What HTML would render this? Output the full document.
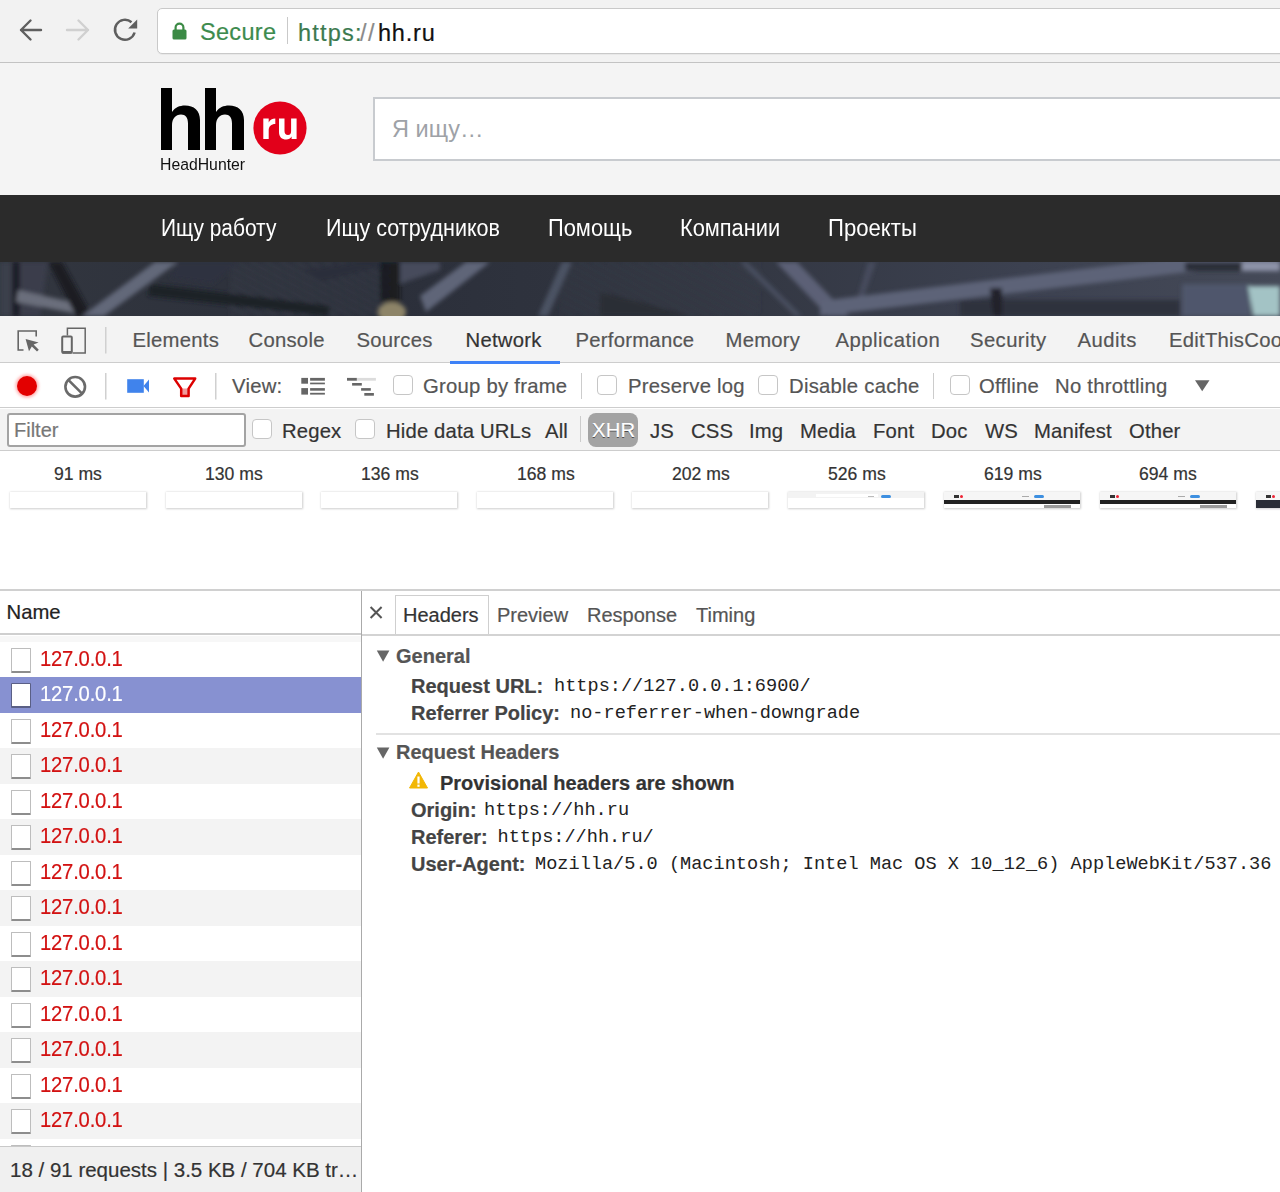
<!DOCTYPE html>
<html><head><meta charset="utf-8">
<style>
*{box-sizing:border-box;margin:0;padding:0}
html,body{width:1280px;height:1192px;overflow:hidden;background:#fff;font-family:"Liberation Sans",sans-serif}
.a{position:absolute;white-space:pre}
body div{white-space:pre;-webkit-text-stroke:0.2px currentColor}
#page div,body div.mono{-webkit-text-stroke:0}
#chrome{position:absolute;left:0;top:0;width:1280px;height:63px;background:#f2f2f2;border-bottom:1px solid #c3c3c3}
#omni{position:absolute;left:157px;top:8px;width:1140px;height:46px;background:#fff;border:1px solid #c9c9c9;border-radius:5px;box-shadow:0 1px 0 rgba(0,0,0,.04)}
#page{position:absolute;left:0;top:63px;width:1280px;height:253px;background:#f4f4f4;overflow:hidden}
#nav{position:absolute;left:0;top:132px;width:1280px;height:67px;background:#2b2b2b}
#hero{position:absolute;left:0;top:199px;width:1280px;height:54px;background:#3a3f4c;overflow:hidden}
.nv{position:absolute;top:18.5px;font-size:23px;line-height:28px;color:#fff;transform-origin:0 0}
.tab{position:absolute;top:327.8px;font-size:20.3px;letter-spacing:0.25px;color:#555;line-height:24px}
.tb2{position:absolute;top:373.5px;font-size:20.3px;letter-spacing:0.25px;color:#555;line-height:24px}
.cb{position:absolute;width:20px;height:20px;border:1px solid #c6c6c6;border-radius:4px;background:#fff}
.ft{position:absolute;top:418.5px;font-size:20.3px;letter-spacing:0.15px;color:#333;line-height:24px}
.tm{position:absolute;top:464px;font-size:17.6px;color:#333;line-height:20px}
.fr{position:absolute;top:492px;width:136px;height:16px;background:#fff;box-shadow:0 0 2px 0.5px rgba(0,0,0,.2);overflow:hidden}
.row{position:absolute;left:0;width:361px;height:35.5px}
.row .ic{position:absolute;left:10.5px;top:6px;width:20px;height:25px;border:1.6px solid #bdbdbd;border-bottom:2.2px solid #8d8d8d;border-radius:1px;background:#fff}
.row .t{position:absolute;left:39.5px;top:5.2px;font-size:21.3px;letter-spacing:-0.2px;color:#d01515;line-height:24px;transform:scaleX(0.95);transform-origin:0 0}
.lbl{position:absolute;left:411px;font-size:20px;font-weight:700;color:#444;line-height:24px}
.mono{position:absolute;font-family:"Liberation Mono",monospace;font-size:18.6px;color:#222;line-height:24px}
</style></head><body>

<!-- Chrome toolbar -->
<div id="chrome">
  <svg class="a" style="left:0;top:0" width="150" height="62" viewBox="0 0 150 62">
    <path d="M21 30H41M21 30L30.5 20.5M21 30L30.5 39.5" stroke="#5f5f5f" stroke-width="2.4" fill="none" stroke-linecap="round" stroke-linejoin="round"/>
    <path d="M67 30H88M88 30L78.5 20.5M88 30L78.5 39.5" stroke="#d0d0d0" stroke-width="2.4" fill="none" stroke-linecap="round" stroke-linejoin="round"/>
    <path d="M134.6 32.5A10 10 0 1 1 131.5 22.2" stroke="#5f5f5f" stroke-width="2.5" fill="none"/>
    <path d="M137.2 19.5V28.6H128.2Z" fill="#5f5f5f"/>
  </svg>
  <div id="omni">
    <svg class="a" style="left:14px;top:13px" width="15" height="18" viewBox="0 0 15 18"><path d="M3.6 8V5.6a3.9 3.9 0 0 1 7.8 0V8" stroke="#3b8a45" stroke-width="2.2" fill="none"/><rect x="0.5" y="7.5" width="14" height="10" rx="1.5" fill="#3b8a45"/></svg>
    <div class="a" style="left:42px;top:8.5px;font-size:23.5px;line-height:28px;color:#3d8b4e;letter-spacing:0.3px">Secure</div>
    <div class="a" style="left:129px;top:8px;width:1px;height:27px;background:#c9c9c9"></div>
    <div class="a" style="left:140px;top:10px;font-size:23.5px;line-height:28px;color:#3c7a4f;letter-spacing:1.2px">https:</div>
    <div class="a" style="left:202px;top:10px;font-size:23.5px;line-height:28px;color:#8a8a8a;letter-spacing:1.5px">//</div>
    <div class="a" style="left:220px;top:10px;font-size:23.5px;line-height:28px;color:#111;letter-spacing:0.8px">hh.ru</div>
  </div>
</div>

<!-- Page -->
<div id="page">
  <svg class="a" style="left:161px;top:25px" width="84" height="62" viewBox="0 0 84 62">
    <path d="M0 0H11V24C14 19.5 18.5 17.5 24 17.5C33 17.5 39 22.5 39 32V62H27V35.5C27 29.5 24.5 26.5 20 26.5C14.5 26.5 11 30.5 11 37.5V62H0Z" fill="#000"/>
    <path transform="translate(44 0)" d="M0 0H11V24C14 19.5 18.5 17.5 24 17.5C33 17.5 39 22.5 39 32V62H27V35.5C27 29.5 24.5 26.5 20 26.5C14.5 26.5 11 30.5 11 37.5V62H0Z" fill="#000"/>
  </svg>
  <svg class="a" style="left:253px;top:38px" width="54" height="54" viewBox="0 0 54 54">
    <circle cx="27" cy="27" r="26.6" fill="#e2001a"/>
    <path transform="translate(10.3 17.5)" d="M0 0H5.4V4C6.5 1.5 9 0 12 0V5.6C8 5.6 5.4 8 5.4 12V20.5H0Z" fill="#fff"/>
    <path transform="translate(26 17.5)" d="M0 0H5.5V12.5C5.5 15.2 6.8 16.4 9 16.4C11.2 16.4 12.1 15 12.1 12.5V0H17.6V20.5H12.6V18C11.5 20 9.6 21 7.4 21C2.8 21 0 18.5 0 13.5Z" fill="#fff"/>
  </svg>
  <div class="a" style="left:160px;top:91.5px;font-size:16.8px;line-height:20px;color:#111;transform:scaleX(0.94);transform-origin:0 0">HeadHunter</div>
  <div class="a" style="left:373px;top:34px;width:1000px;height:64px;background:#fff;border:2px solid #c8cbcf"></div>
  <div class="a" style="left:392px;top:52px;font-size:23.5px;line-height:28px;color:#9ea2a7">Я ищу…</div>
  <div id="nav">
    <div class="nv" style="left:161px;transform:scaleX(0.909)">Ищу работу</div>
    <div class="nv" style="left:326px;transform:scaleX(0.937)">Ищу сотрудников</div>
    <div class="nv" style="left:548px;transform:scaleX(0.95)">Помощь</div>
    <div class="nv" style="left:680px;transform:scaleX(0.948)">Компании</div>
    <div class="nv" style="left:828px;transform:scaleX(0.962)">Проекты</div>
  </div>
  <div id="hero"><svg width="1280" height="54" viewBox="0 0 1280 54" style="display:block">
<defs>
<linearGradient id="hg" x1="0" y1="0" x2="1" y2="0">
<stop offset="0" stop-color="#32363f"/><stop offset="0.3" stop-color="#2b2f3a"/><stop offset="0.55" stop-color="#323641"/><stop offset="0.8" stop-color="#3c4150"/><stop offset="1" stop-color="#454a58"/>
</linearGradient>
<filter id="hb" x="-5%" y="-20%" width="110%" height="140%"><feGaussianBlur stdDeviation="2.2"/></filter>
<pattern id="stp" width="7" height="7" patternUnits="userSpaceOnUse" patternTransform="rotate(28)"><rect width="7" height="3" fill="#3a3f4c"/></pattern>
</defs>
<rect width="1280" height="54" fill="url(#hg)"/>
<g filter="url(#hb)">
<rect x="230" y="0" width="160" height="54" fill="url(#stp)" opacity="0.6"/>
<rect x="560" y="0" width="200" height="54" fill="url(#stp)" opacity="0.45"/>
<path d="M0 0H12V54H0Z" fill="#3b3f4c"/>
<path d="M12 0H20V54H12Z" fill="#1c1f27"/>
<path d="M20 0H48L40 54H20Z" fill="#3a3e4b"/>
<path d="M18 28L80 42L78 52L16 40Z" fill="#6a6e7c"/>
<path d="M48 0H62L92 54H76Z" fill="#1a1c23"/>
<path d="M155 0H178L104 54H82Z" fill="#626779"/>
<path d="M150 22L330 44L328 54L148 34Z" fill="#1d2028"/>
<path d="M178 0H240L212 22L170 16Z" fill="#2f3340"/>
<path d="M300 8L360 0H400L320 20Z" fill="#2a2e3a"/>
<ellipse cx="392" cy="50" rx="14" ry="10" fill="#8d8468"/>
<path d="M380 0H400V40H380Z" fill="#15171d" opacity="0.8"/>
<path d="M400 0H440L440 8L400 22Z" fill="#474c5c"/>
<path d="M420 34L466 0H490L426 50Z" fill="#5f6578"/>
<path d="M562 0H572L548 54H538Z" fill="#4c5264"/>
<path d="M600 30L640 40L690 54H600Z" fill="#2a2d36"/>
<path d="M740 0H747L802 54H795Z" fill="#4a4f60"/>
<path d="M776 0H797L849 54H828Z" fill="#5c6176"/>
<path d="M868 0H876L862 40H856Z" fill="#474c5d"/>
<path d="M820 39L1280 -17V-1L820 54Z" fill="#5d6378"/>
<path d="M960 38H1180V54H960Z" fill="#2f333e"/>
<path d="M990 26H1002V54H993Z" fill="#20232b"/>
<path d="M1185 0H1242V9H1185Z" fill="#2b2e38"/>
<path d="M1242 0H1280V9H1242Z" fill="#8d93a8"/>
<path d="M1182 22H1250V54H1182Z" fill="#4f566c"/>
<path d="M1248 24H1280V54H1253Z" fill="#a3c3c5"/>
</g>
</svg></div>
</div>

<!-- DevTools -->
<div class="a" style="left:0;top:316px;width:1280px;height:47px;background:#f3f3f3;border-bottom:1px solid #cdcdcd"></div>
<div class="a" style="left:0;top:364px;width:1280px;height:44px;background:#fff;border-bottom:1px solid #cdcdcd"></div>
<div class="a" style="left:0;top:409px;width:1280px;height:42px;background:#f3f3f3;border-bottom:1px solid #cdcdcd"></div>

<svg class="a" style="left:0;top:316px" width="240" height="92" viewBox="0 316 240 92">
  <!-- inspect -->
  <path d="M23.5 350H18.2V331H36.2V336.5" stroke="#666" stroke-width="1.6" fill="none"/>
  <path d="M25.6 339L38.6 342.6L33.6 344.6L38.8 349.8L37 351.6L31.8 346.4L29 351.2Z" fill="#666"/>
  <!-- device -->
  <path d="M67.4 335.5V328.2H85.2V352.9H72.5" stroke="#666" stroke-width="1.5" fill="none"/>
  <rect x="62.2" y="336.5" width="9.6" height="16.2" rx="1" stroke="#666" stroke-width="2" fill="none"/>
  <rect x="62.2" y="351" width="9.6" height="2.6" fill="#666"/>
  <rect x="105" y="327" width="1.5" height="26.5" fill="#d0d0d0"/>
  <!-- record -->
  <circle cx="27" cy="386" r="11.5" fill="#ff6a6a" opacity="0.55" filter="url(#glow)"/><circle cx="27" cy="386" r="10" fill="#e30000"/>
  <!-- clear -->
  <circle cx="75.2" cy="386.8" r="9.8" stroke="#6a6a6a" stroke-width="2.6" fill="none"/>
  <path d="M68.3 379.9L82.1 393.7" stroke="#6a6a6a" stroke-width="2.6"/>
  <rect x="105" y="373" width="1.5" height="26.5" fill="#d0d0d0"/>
  <!-- camera -->
  <rect x="127.2" y="379.2" width="16.6" height="13.6" fill="#4083ec"/>
  <path d="M143.5 386L149 379.5V392.5Z" fill="#4083ec"/>
  <!-- funnel -->
  <path d="M181.5 388.5L189 388.5L189 395.8L181.5 395.8Z" fill="#f09a9a"/>
  <path d="M174.3 378.6H195.2L188.6 388.6V396H181.2V388.6Z" stroke="#dd0000" stroke-width="2.5" fill="none" stroke-linejoin="round"/>
  <rect x="215" y="373" width="1.5" height="26.5" fill="#d0d0d0"/>
  <defs><filter id="glow" x="-50%" y="-50%" width="200%" height="200%"><feGaussianBlur in="SourceGraphic" stdDeviation="1.8"/></filter></defs>
</svg>
<svg class="a" style="left:295px;top:370px" width="90" height="32" viewBox="295 370 90 32" fill="#666">
  <rect x="301.3" y="377.9" width="6.7" height="5.8"/>
  <rect x="301.3" y="388.1" width="6.7" height="6.5"/>
  <rect x="310.1" y="377.9" width="14.8" height="2.8"/>
  <rect x="310.1" y="382.6" width="14.8" height="1.7"/>
  <rect x="310.1" y="388.1" width="14.8" height="2.6"/>
  <rect x="310.1" y="392.8" width="14.8" height="1.8"/>
  <rect x="347" y="377.9" width="9.9" height="2.8"/>
  <rect x="356.9" y="377.9" width="19" height="2.8" fill="#dcdcdc"/>
  <rect x="352.1" y="383" width="9.7" height="2.6"/>
  <rect x="361.1" y="388.1" width="9.7" height="2.6"/>
  <rect x="364.3" y="393" width="9.6" height="2.7"/>
</svg>
<svg class="a" style="left:1190px;top:375px" width="24" height="20" viewBox="1190 375 24 20"><path d="M1195 380.2H1209.5L1202.2 391.2Z" fill="#666"/></svg>
<div class="tab" style="left:132.5px">Elements</div>
<div class="tab" style="left:248.5px">Console</div>
<div class="tab" style="left:356.5px">Sources</div>
<div class="tab" style="left:465.5px;color:#333">Network</div>
<div class="a" style="left:450px;top:361px;width:110px;height:3px;background:#3e82f7"></div>
<div class="tab" style="left:575.5px">Performance</div>
<div class="tab" style="left:725.5px">Memory</div>
<div class="tab" style="left:835.5px;letter-spacing:0.5px">Application</div>
<div class="tab" style="left:970px;letter-spacing:0.4px">Security</div>
<div class="tab" style="left:1077.5px;letter-spacing:0.5px">Audits</div>
<div class="tab" style="left:1169px">EditThisCookie</div>

<div class="tb2" style="left:232px">View:</div>
<div class="cb" style="left:393px;top:375px"></div>
<div class="tb2" style="left:423px">Group by frame</div>
<div class="a" style="left:581px;top:373px;width:1px;height:26px;background:#ccc"></div>
<div class="cb" style="left:597px;top:375px"></div>
<div class="tb2" style="left:628px">Preserve log</div>
<div class="cb" style="left:758px;top:375px"></div>
<div class="tb2" style="left:789px">Disable cache</div>
<div class="a" style="left:933px;top:373px;width:1px;height:26px;background:#ccc"></div>
<div class="cb" style="left:950px;top:375px"></div>
<div class="tb2" style="left:979px">Offline</div>
<div class="tb2" style="left:1055px">No throttling</div>

<div class="a" style="left:7px;top:413px;width:239px;height:34px;background:#fff;border:2px solid #a3a3a3;border-radius:3px"></div>
<div class="a" style="left:14px;top:418px;font-size:20px;line-height:24px;color:#777">Filter</div>
<div class="cb" style="left:252px;top:419px"></div>
<div class="ft" style="left:282px">Regex</div>
<div class="cb" style="left:355px;top:419px"></div>
<div class="ft" style="left:386px">Hide data URLs</div>
<div class="ft" style="left:545px">All</div>
<div class="a" style="left:580px;top:416px;width:1px;height:26px;background:#ccc"></div>
<div class="a" style="left:588px;top:413px;width:50px;height:33.5px;background:#a3a3a3;border-radius:8px"></div>
<div class="ft" style="left:592px;top:417.5px;color:#fff;text-shadow:0 1px 0 rgba(0,0,0,.55)">XHR</div>
<div class="ft" style="left:650px">JS</div>
<div class="ft" style="left:691px">CSS</div>
<div class="ft" style="left:749px">Img</div>
<div class="ft" style="left:800px">Media</div>
<div class="ft" style="left:873px">Font</div>
<div class="ft" style="left:931px">Doc</div>
<div class="ft" style="left:985px">WS</div>
<div class="ft" style="left:1034px">Manifest</div>
<div class="ft" style="left:1129px">Other</div>

<div class="tm" style="left:54px">91 ms</div>
<div class="tm" style="left:205px">130 ms</div>
<div class="tm" style="left:361px">136 ms</div>
<div class="tm" style="left:517px">168 ms</div>
<div class="tm" style="left:672px">202 ms</div>
<div class="tm" style="left:828px">526 ms</div>
<div class="tm" style="left:984px">619 ms</div>
<div class="tm" style="left:1139px">694 ms</div>

<div class="fr" style="left:10px"></div>
<div class="fr" style="left:165.5px"></div>
<div class="fr" style="left:321px"></div>
<div class="fr" style="left:476.5px"></div>
<div class="fr" style="left:632px"></div>
<div class="fr" style="left:788px"><div class="a" style="left:0;top:0;width:136px;height:6px;background:#f3f3f3"></div><div class="a" style="left:28px;top:1.5px;width:62px;height:3px;background:#fff"></div><div class="a" style="left:93px;top:2.7px;width:9.5px;height:3.2px;background:#3d8fe0;border-radius:1.5px"></div><div class="a" style="left:80px;top:3.5px;width:6px;height:1px;background:#bbb"></div></div>
<div class="fr" style="left:944px"><div class="a" style="left:0;top:0;width:136px;height:8px;background:#f6f6f6"></div><div class="a" style="left:10px;top:2.5px;width:5px;height:3.5px;background:#333"></div><div class="a" style="left:15.5px;top:3px;width:3px;height:3px;background:#e23;border-radius:50%"></div><div class="a" style="left:90px;top:2.5px;width:10px;height:3.3px;background:#3d8fe0;border-radius:1.5px"></div><div class="a" style="left:78px;top:3.6px;width:7px;height:1px;background:#aaa"></div><div class="a" style="left:0;top:8px;width:136px;height:3.6px;background:#222"></div><div class="a" style="left:100px;top:13px;width:27px;height:3px;background:#9a9a9a"></div></div>
<div class="fr" style="left:1100px"><div class="a" style="left:0;top:0;width:136px;height:8px;background:#f6f6f6"></div><div class="a" style="left:10px;top:2.5px;width:5px;height:3.5px;background:#333"></div><div class="a" style="left:15.5px;top:3px;width:3px;height:3px;background:#e23;border-radius:50%"></div><div class="a" style="left:90px;top:2.5px;width:10px;height:3.3px;background:#3d8fe0;border-radius:1.5px"></div><div class="a" style="left:78px;top:3.6px;width:7px;height:1px;background:#aaa"></div><div class="a" style="left:0;top:8px;width:136px;height:3.6px;background:#222"></div><div class="a" style="left:100px;top:13px;width:27px;height:3px;background:#9a9a9a"></div></div>
<div class="fr" style="left:1256px"><div class="a" style="left:0;top:0;width:136px;height:8px;background:#f6f6f6"></div><div class="a" style="left:10px;top:2.5px;width:5px;height:3.5px;background:#333"></div><div class="a" style="left:15.5px;top:3px;width:3px;height:3px;background:#e23;border-radius:50%"></div><div class="a" style="left:0;top:8px;width:136px;height:8px;background:#2a2d36"></div></div>
<div class="a" style="left:0;top:589px;width:1280px;height:2px;background:#d0d0d0"></div>

<!-- Request list -->
<div class="a" style="left:0;top:591px;width:361px;height:44px;background:#fff;border-bottom:2px solid #cfcfcf"></div>
<div class="a" style="left:6.5px;top:600px;font-size:20.3px;line-height:24px;color:#222">Name</div>
<div class="a" style="left:0;top:636px;width:361px;height:5.5px;background:#f7f7f7"></div>
<div class="row" style="top:641.5px;background:#fff"><div class="ic" style=""></div><div class="t" style="color:#d21111">127.0.0.1</div></div>
<div class="row" style="top:677.0px;background:#8791d1"><div class="ic" style="border-color:#5a5f85;"></div><div class="t" style="color:#fff">127.0.0.1</div></div>
<div class="row" style="top:712.5px;background:#fff"><div class="ic" style=""></div><div class="t" style="color:#d21111">127.0.0.1</div></div>
<div class="row" style="top:748.0px;background:#f3f3f3"><div class="ic" style=""></div><div class="t" style="color:#d21111">127.0.0.1</div></div>
<div class="row" style="top:783.5px;background:#fff"><div class="ic" style=""></div><div class="t" style="color:#d21111">127.0.0.1</div></div>
<div class="row" style="top:819.0px;background:#f3f3f3"><div class="ic" style=""></div><div class="t" style="color:#d21111">127.0.0.1</div></div>
<div class="row" style="top:854.5px;background:#fff"><div class="ic" style=""></div><div class="t" style="color:#d21111">127.0.0.1</div></div>
<div class="row" style="top:890.0px;background:#f3f3f3"><div class="ic" style=""></div><div class="t" style="color:#d21111">127.0.0.1</div></div>
<div class="row" style="top:925.5px;background:#fff"><div class="ic" style=""></div><div class="t" style="color:#d21111">127.0.0.1</div></div>
<div class="row" style="top:961.0px;background:#f3f3f3"><div class="ic" style=""></div><div class="t" style="color:#d21111">127.0.0.1</div></div>
<div class="row" style="top:996.5px;background:#fff"><div class="ic" style=""></div><div class="t" style="color:#d21111">127.0.0.1</div></div>
<div class="row" style="top:1032.0px;background:#f3f3f3"><div class="ic" style=""></div><div class="t" style="color:#d21111">127.0.0.1</div></div>
<div class="row" style="top:1067.5px;background:#fff"><div class="ic" style=""></div><div class="t" style="color:#d21111">127.0.0.1</div></div>
<div class="row" style="top:1103.0px;background:#f3f3f3"><div class="ic" style=""></div><div class="t" style="color:#d21111">127.0.0.1</div></div>
<div class="row" style="top:1138.5px;background:#fff"><div class="ic" style=""></div><div class="t" style="color:#d21111">127.0.0.1</div></div>
<div class="a" style="left:0;top:1146px;width:361px;height:46px;background:#f0f0f0;border-top:1.5px solid #c9c9c9"></div>
<div class="a" style="left:10px;top:1157.5px;font-size:20.5px;line-height:24px;color:#333">18 / 91 requests | 3.5 KB / 704 KB tr…</div>
<div class="a" style="left:361px;top:591px;width:1px;height:601px;background:#aaa"></div>

<!-- Details -->
<div class="a" style="left:362px;top:591px;width:918px;height:45px;background:#fff;border-bottom:2px solid #d3d3d3"></div>
<div class="a" style="left:395px;top:595px;width:94px;height:39px;background:#fff;border:1.5px solid #cfcfcf;border-bottom:none"></div>
<svg class="a" style="left:369px;top:605px" width="14" height="15" viewBox="0 0 14 15"><path d="M1.6 2L12.6 13M12.6 2L1.6 13" stroke="#555" stroke-width="2"/></svg>
<div class="a" style="left:403px;top:603px;font-size:20px;line-height:24px;color:#333">Headers</div>
<div class="a" style="left:497px;top:603px;font-size:20px;line-height:24px;color:#555">Preview</div>
<div class="a" style="left:587px;top:603px;font-size:20px;line-height:24px;color:#555">Response</div>
<div class="a" style="left:696px;top:603px;font-size:20px;line-height:24px;color:#555">Timing</div>
<svg class="a" style="left:376px;top:649.5px" width="14" height="13" viewBox="0 0 14 13"><path d="M0.8 0.5H13.4L7.1 11.8Z" fill="#666"/></svg>
<div class="a" style="left:396px;top:644px;font-size:20px;font-weight:700;line-height:24px;color:#555">General</div>
<div class="lbl" style="top:674px">Request URL:</div>
<div class="mono" style="left:554px;top:675px">https://127.0.0.1:6900/</div>
<div class="lbl" style="top:701px">Referrer Policy:</div>
<div class="mono" style="left:570px;top:702px">no-referrer-when-downgrade</div>
<div class="a" style="left:376px;top:733px;width:904px;height:2px;background:#e2e2e2"></div>
<svg class="a" style="left:376px;top:746.5px" width="14" height="13" viewBox="0 0 14 13"><path d="M0.8 0.5H13.4L7.1 11.8Z" fill="#666"/></svg>
<div class="a" style="left:396px;top:740px;font-size:20px;font-weight:700;line-height:24px;color:#555">Request Headers</div>
<svg class="a" style="left:409px;top:771px" width="19" height="18" viewBox="0 0 19 18"><path d="M9.5 1L18.5 17H0.5Z" fill="#f2b705" stroke="#f2b705" stroke-linejoin="round" stroke-width="1"/><rect x="8.4" y="5.5" width="2.2" height="7" fill="#fff"/><rect x="8.4" y="13.6" width="2.2" height="2.2" fill="#fff"/></svg>
<div class="a" style="left:440px;top:771px;font-size:20px;font-weight:700;line-height:24px;color:#333">Provisional headers are shown</div>
<div class="lbl" style="top:797.5px">Origin:</div>
<div class="mono" style="left:484px;top:798.5px">https://hh.ru</div>
<div class="lbl" style="top:824.5px">Referer:</div>
<div class="mono" style="left:497.5px;top:825.5px">https://hh.ru/</div>
<div class="lbl" style="top:851.5px">User-Agent:</div>
<div class="mono" style="left:535px;top:852.5px">Mozilla/5.0 (Macintosh; Intel Mac OS X 10_12_6) AppleWebKit/537.36 (KHTML, like Gecko)</div>
</body></html>
